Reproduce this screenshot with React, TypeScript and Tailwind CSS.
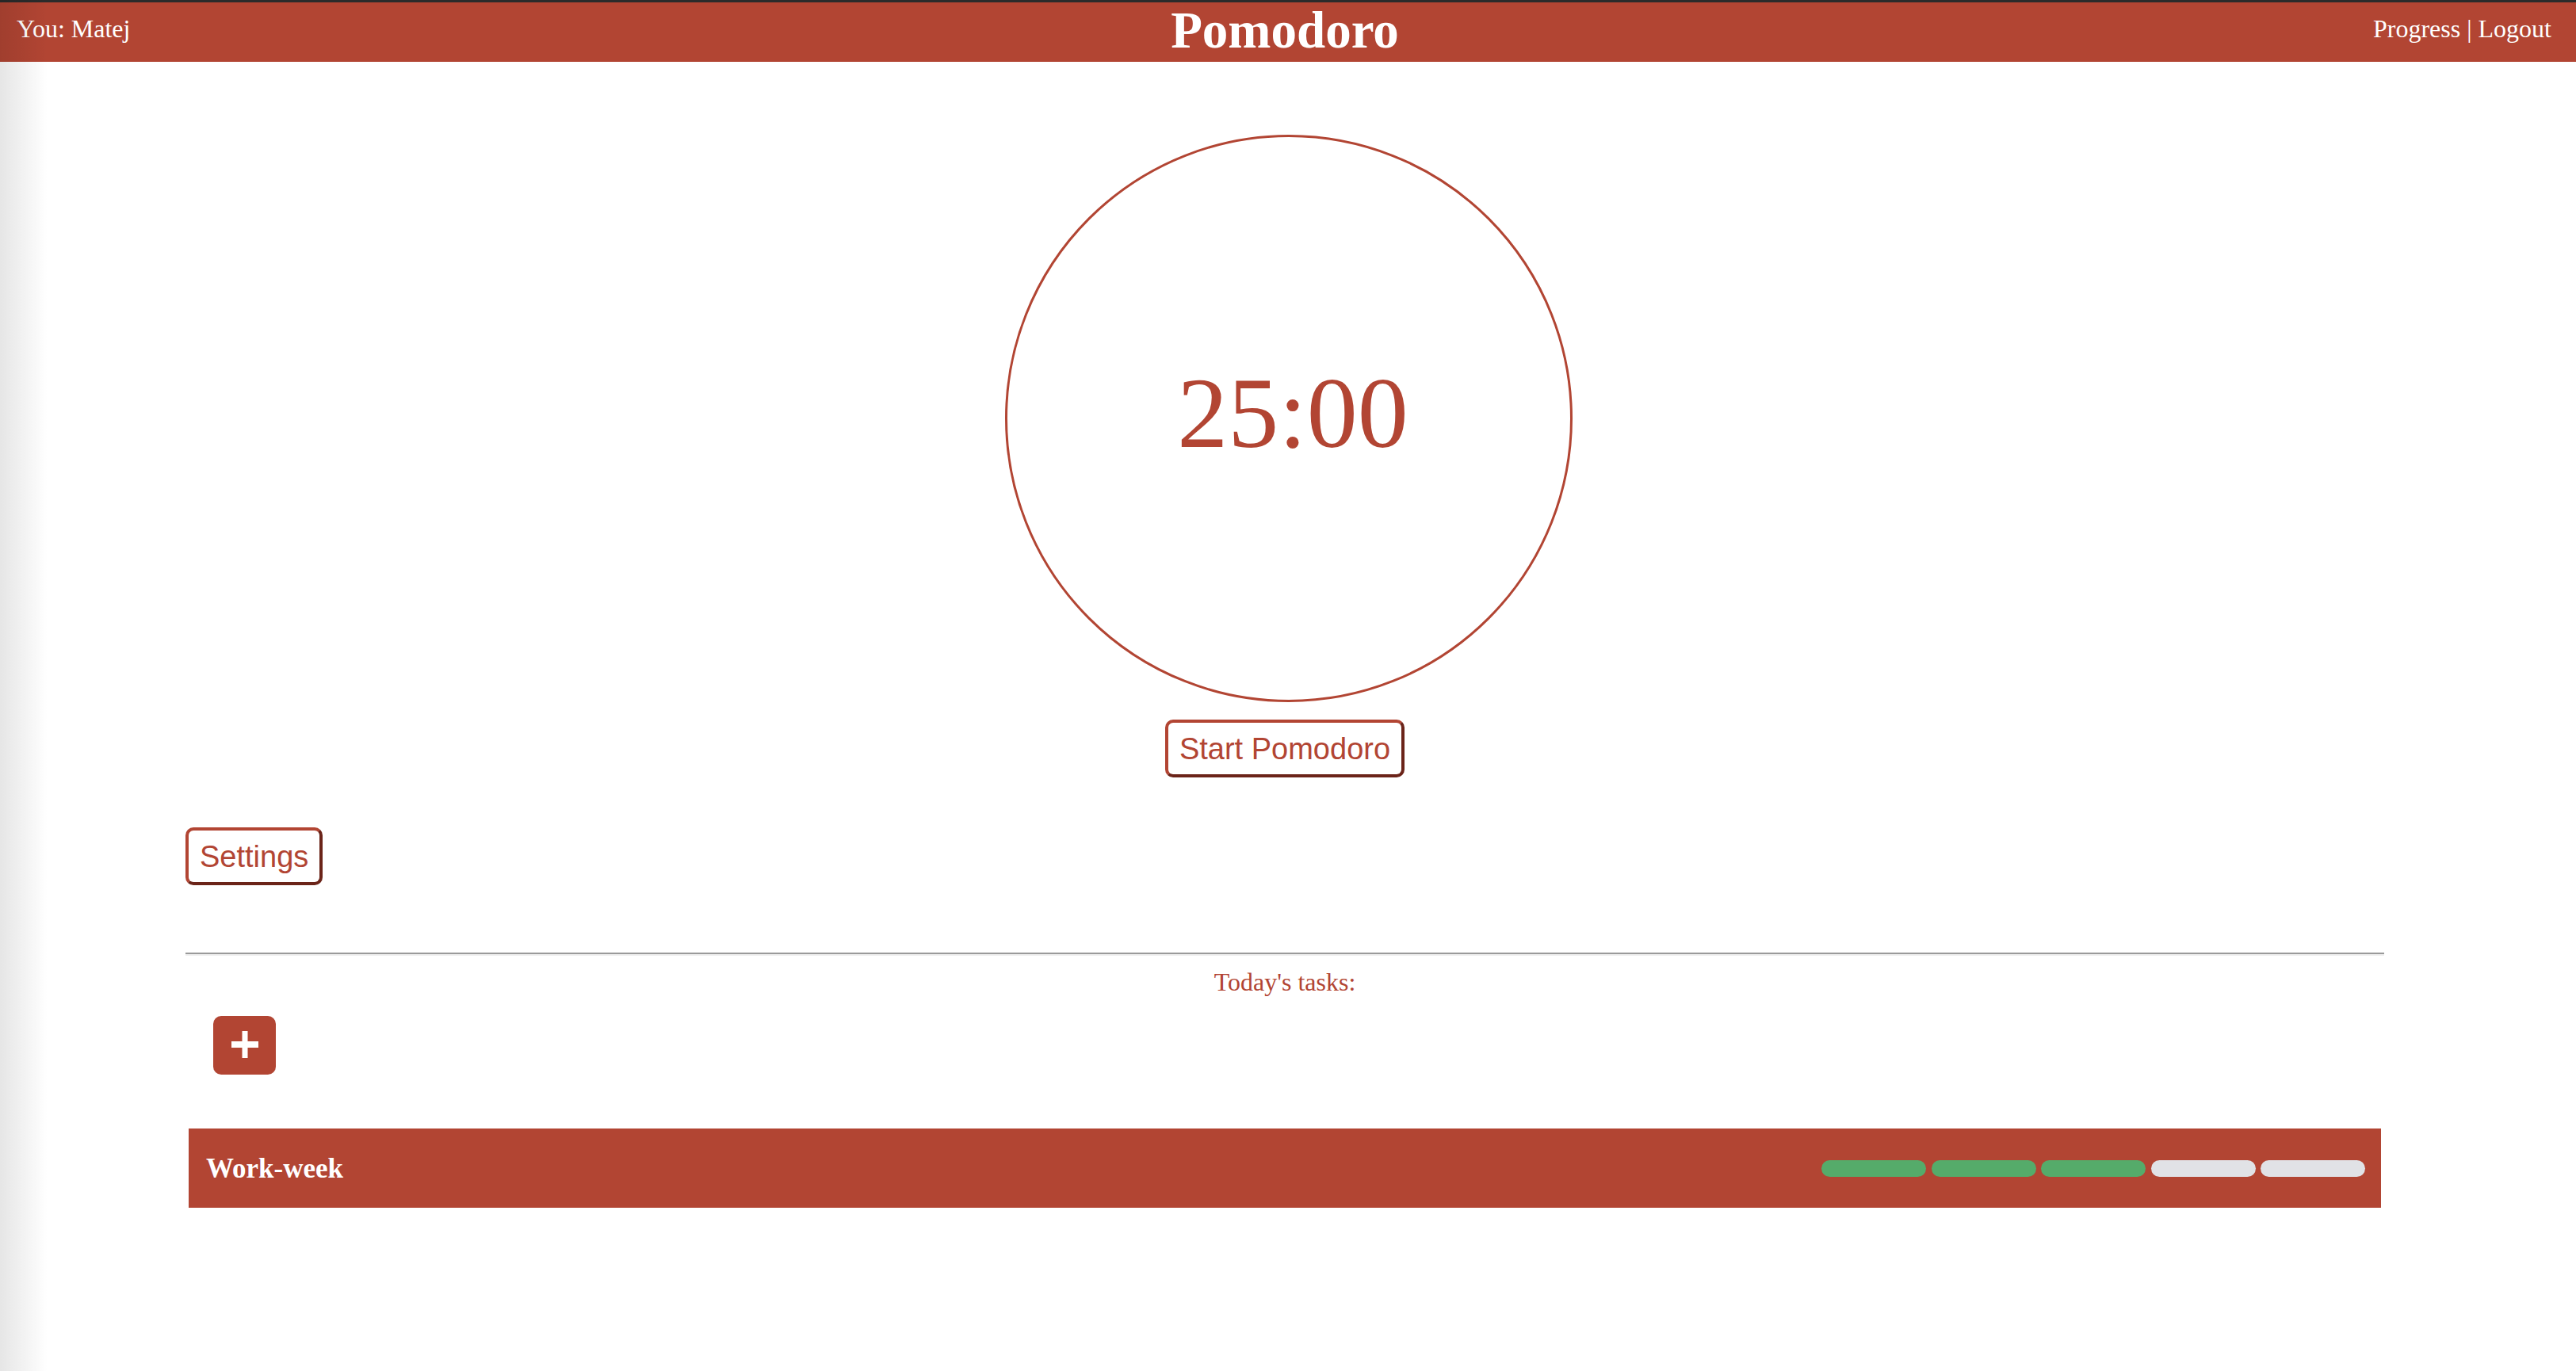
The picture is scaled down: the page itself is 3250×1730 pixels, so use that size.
import React from 'react'

const serif = "font-['Liberation_Serif','Times_New_Roman',serif]"
const sans = "font-['Liberation_Sans',Arial,sans-serif]"

const sessions = [true, true, true, false, false]

function OutsetButton({ label, className }: { label: string; className?: string }) {
  return (
    <button
      className={`${sans} flex h-[73px] items-center rounded-[10px] border-[4px] border-t-[#b24533] border-l-[#b24533] border-r-[#6b2419] border-b-[#6b2419] bg-white px-[14px] text-[38px] leading-none text-[#b24533] ${className ?? ''}`}
    >
      {label}
    </button>
  )
}

function PlusIcon() {
  return (
    <svg width="34" height="34" viewBox="0 0 34 34" aria-hidden>
      <rect x="13.5" y="0" width="7" height="34" fill="white" />
      <rect x="0" y="13" width="34" height="8" fill="white" />
    </svg>
  )
}

export default function App() {
  return (
    <div className="relative min-h-[1730px] w-full bg-white">
      <div className="h-[3px] bg-[#2b2b2b]" />
      <header className={`${serif} grid h-[75px] grid-cols-3 items-start bg-[#b24533] text-white`}>
        <div className="pl-[21px] pt-[17px] text-[32px] leading-none">You: Matej</div>
        <h1 className="pr-[8px] pt-[3px] text-center text-[65px] font-bold leading-none">Pomodoro</h1>
        <div className="pr-[31px] pt-[17px] text-right text-[32px] leading-none">
          <span>Progress</span> | <span>Logout</span>
        </div>
      </header>

      <main className="flex flex-col pl-[234px] pr-[242px]">
        <div className="mt-[92px] flex flex-col items-center">
          <div className="ml-[10px] flex h-[716px] w-[716px] items-center justify-center rounded-full border-[3px] border-[#b24533] pb-[14px] pl-[10px]">
            <span className={`${serif} text-[128px] leading-none text-[#b24533]`}>25:00</span>
          </div>
          <OutsetButton label="Start Pomodoro" className="mt-[22px] px-[13px]" />
        </div>

        <OutsetButton label="Settings" className="mt-[63px] self-start" />

        <hr className="mt-[85px] border-t-2 border-b-2 border-t-[#9a9a9a] border-b-[#eeeeee]" />

        <p className={`${serif} mt-[15px] text-center text-[32px] leading-[36px] text-[#b24533]`}>Today's tasks:</p>

        <button className="ml-[35px] mt-[25px] flex h-[74px] w-[79px] items-center justify-center rounded-[10px] bg-[#b24533] pb-[3px]">
          <PlusIcon />
        </button>

        <div className="mx-[4px] mt-[68px] flex h-[100px] items-center justify-between bg-[#b24533] pl-[22px] pr-[20px]">
          <span className={`${serif} text-[35px] font-bold leading-none text-white`}>Work-week</span>
          <div className="flex gap-[6.5px]">
            {sessions.map((done, i) => (
              <div
                key={i}
                className={`h-[21px] w-[132px] rounded-full ${done ? 'bg-[#55ab6a]' : 'bg-[#e1e2e6]'}`}
              />
            ))}
          </div>
        </div>
      </main>

      <div className="pointer-events-none absolute left-0 top-0 h-full w-[60px] bg-linear-to-r from-black/10 to-transparent" />
    </div>
  )
}
